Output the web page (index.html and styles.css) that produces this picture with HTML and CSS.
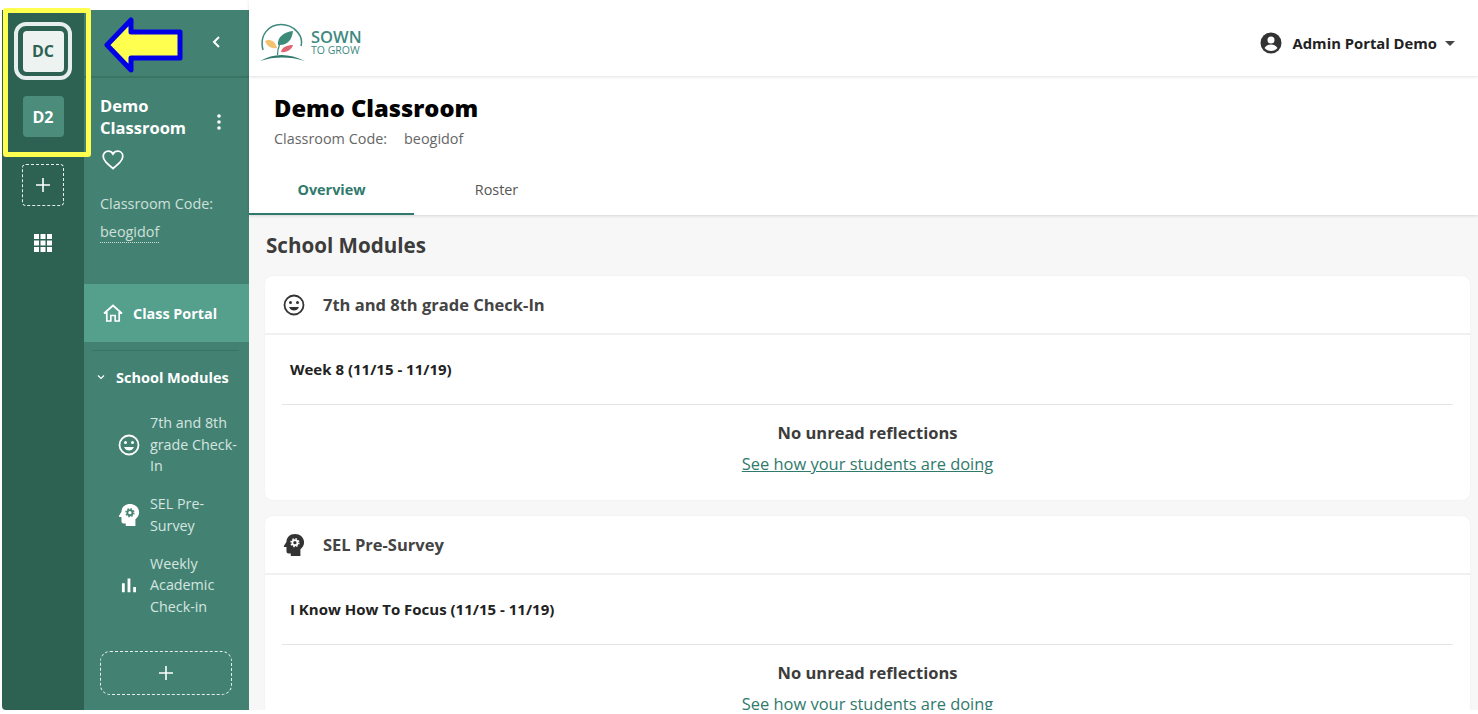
FILE: index.html
```html
<!DOCTYPE html>
<html lang="en">
<head>
<meta charset="utf-8">
<title>Demo Classroom</title>
<link rel="stylesheet" href="styles.css">
</head>
<body>
<div class="app">
  <nav class="rail">
    <div class="ring"><div class="tile tile-active">DC</div></div>
    <div class="tile tile-other">D2</div>
    <div class="tile-add"><svg width="16" height="16" viewBox="0 0 16 16"><path d="M8 1v14M1 8h14" stroke="#fff" stroke-width="1.6"/></svg></div>
    <svg class="grid-icon" width="18" height="18" viewBox="0 0 18 18" fill="#fff"><path d="M0 0h5v5H0zM6.500 0h5v5h-5zM13 0h5v5h-5zM0 6.500h5v5H0zM6.500 6.500h5v5h-5zM13 6.500h5v5h-5zM0 13h5v5H0zM6.500 13h5v5h-5zM13 13h5v5h-5z"/></svg>
  </nav>
  <aside class="panel">
    <div class="panel-top"><svg width="10" height="14" viewBox="0 0 10 14" fill="none"><path d="M8 2 3 7l5 5" stroke="#fff" stroke-width="2"/></svg></div>
    <div class="class-info">
      <div class="class-head">
        <div class="class-name">Demo Classroom</div>
        <svg class="dots" width="4" height="16" viewBox="0 0 4 16" fill="#fff"><circle cx="2" cy="2" r="1.800"/><circle cx="2" cy="8" r="1.800"/><circle cx="2" cy="14" r="1.800"/></svg>
      </div>
      <svg class="heart" width="22" height="20" viewBox="0 0 22 20" fill="none"><path d="M11 18.500C5 13.500 1.200 10.300 1.200 6.300 1.200 3.300 3.500 1.200 6.200 1.200c1.900 0 3.800 1 4.800 2.800 1-1.800 2.900-2.800 4.800-2.800 2.700 0 5 2.100 5 5.100 0 4-3.800 7.200-9.800 12.200z" stroke="#fff" stroke-width="1.800"/></svg>
      <div class="code-label">Classroom Code:</div>
      <div class="code-value"><span>beogidof</span></div>
    </div>
    <div class="portal">
      <svg width="20" height="18" viewBox="0 0 20 18" fill="none" stroke="#fff" stroke-width="1.700"><path d="M1 9.500 10 1.500l9 8M3.800 8v9h4v-5.500h4.400V17h4V8"/></svg>
      <span>Class Portal</span>
    </div>
    <div class="panel-rule"></div>
    <div class="modules-head">
      <svg width="8" height="6" viewBox="0 0 8 6" fill="none"><path d="m1 1.500 3 3 3-3" stroke="#fff" stroke-width="1.200"/></svg>
      <span>School Modules</span>
    </div>
    <ul class="module-list">
      <li class="module">
        <svg class="module-icon" width="22" height="22" viewBox="0 0 22 22" fill="none"><circle cx="11" cy="11" r="9.500" stroke="#fff" stroke-width="1.800"/><circle cx="7.500" cy="8.500" r="1.500" fill="#fff"/><circle cx="14.500" cy="8.500" r="1.500" fill="#fff"/><path d="M6 13c1 2.500 3 3.500 5 3.500s4-1 5-3.500z" fill="#fff"/></svg>
        <span>7th and 8th grade Check-In</span>
      </li>
      <li class="module">
        <svg class="module-icon" width="22" height="24" viewBox="0 0 24 26"><path d="M13 1C7.500 1 3.800 4.800 3.800 9.500L1 14c-.3.600.1 1.200.8 1.200h2V20c0 1.200 1 2.200 2.200 2.200h2.500V25h10.500v-7.500c2.500-1.700 4-4.500 4-7.500C23 4.800 18.500 1 13 1z" fill="#fff"/><circle cx="13" cy="10.500" r="2.800" fill="none" stroke="#438272" stroke-width="2"/><circle cx="13" cy="10.500" r="4.300" fill="none" stroke="#438272" stroke-width="1.500" stroke-dasharray="1.700 1.680"/></svg>
        <span>SEL Pre-Survey</span>
      </li>
      <li class="module">
        <svg class="module-icon module-bars" width="15" height="15" viewBox="0 0 16 16" fill="#fff"><path d="M1 6h3v10H1zM7 1h3v15H7zM13 10h3v6h-3z"/></svg>
        <span>Weekly Academic Check-in</span>
      </li>
    </ul>
    <div class="module-add"><svg width="16" height="16" viewBox="0 0 16 16"><path d="M8 1v14M1 8h14" stroke="#fff" stroke-width="1.600"/></svg></div>
  </aside>
  <div class="content">
    <header class="topbar">
      <div class="logo">
        <svg width="46" height="38" viewBox="0 0 46 38" fill="none">
          <path d="M3 27C-1 12 9 1.500 21 1.500S44 12 41 23" stroke="#3f8a80" stroke-width="1.500"/>
          <path d="M0 38c7-4 14-6 21.500-6S37 34 45 38c-8-2.500-15-3.500-23-3.500S8 35.500 0 38z" fill="#2f7a6c"/>
          <path d="M17.500 32c0-4 .5-7 2-10" stroke="#3f8a80" stroke-width="1.300"/>
          <path d="M18 22c-1-8 6-13 15-14-1 9-6 15-15 14z" fill="#3c8a78"/>
          <path d="M5 18c4-2 10-1 12 7-6 1-10-2-12-7z" fill="#f3c26f"/>
          <path d="M21 29c1-5 6-7 12-7-1 4-6 8-12 7z" fill="#dd6470"/>
        </svg>
        <div class="logo-text"><div class="logo-main">SOWN</div><div class="logo-sub">TO GROW</div></div>
      </div>
      <div class="user">
        <svg class="user-icon" width="22" height="22" viewBox="0 0 22 22"><circle cx="11" cy="11" r="10.500" fill="#333"/><circle cx="11" cy="8" r="3.500" fill="#fff"/><path d="M4.500 16c1.500-2.500 4-3.500 6.500-3.500s5 1 6.500 3.500c-1.500 2-4 3-6.500 3s-5-1-6.500-3z" fill="#fff"/></svg>
        <span>Admin Portal Demo</span>
        <svg width="10" height="5" viewBox="0 0 10 5" fill="#444"><path d="M0 0h10L5 5z"/></svg>
      </div>
    </header>
    <section class="class-bar">
      <h1>Demo Classroom</h1>
      <div class="class-code"><span>Classroom Code:</span><span>beogidof</span></div>
      <div class="tabs">
        <div class="tab tab-active">Overview</div>
        <div class="tab tab-plain">Roster</div>
      </div>
    </section>
    <main class="body">
      <h2>School Modules</h2>
      <article class="card">
        <div class="card-head">
          <svg width="22" height="22" viewBox="0 0 22 22" fill="none"><circle cx="11" cy="11" r="9.500" stroke="#333" stroke-width="1.800"/><circle cx="7.500" cy="8.500" r="1.500" fill="#333"/><circle cx="14.500" cy="8.500" r="1.500" fill="#333"/><path d="M6 13c1 2.500 3 3.500 5 3.500s4-1 5-3.500z" fill="#333"/></svg>
          <span>7th and 8th grade Check-In</span>
        </div>
        <div class="card-week">Week 8 (11/15 - 11/19)</div>
        <div class="card-body">
          <div class="none">No unread reflections</div>
          <a class="see" href="#">See how your students are doing</a>
        </div>
      </article>
      <article class="card">
        <div class="card-head">
          <svg width="24" height="26" viewBox="0 0 24 26"><path d="M13 1C7.500 1 3.800 4.800 3.800 9.500L1 14c-.3.600.1 1.200.8 1.200h2V20c0 1.200 1 2.200 2.200 2.200h2.500V25h10.500v-7.500c2.500-1.700 4-4.500 4-7.500C23 4.800 18.500 1 13 1z" fill="#333"/><circle cx="13" cy="10.500" r="2.800" fill="none" stroke="#fff" stroke-width="2"/><circle cx="13" cy="10.500" r="4.300" fill="none" stroke="#fff" stroke-width="1.500" stroke-dasharray="1.700 1.680"/></svg>
          <span>SEL Pre-Survey</span>
        </div>
        <div class="card-week">I Know How To Focus (11/15 - 11/19)</div>
        <div class="card-body">
          <div class="none">No unread reflections</div>
          <a class="see" href="#">See how your students are doing</a>
        </div>
      </article>
    </main>
  </div>
  <div class="highlight"></div>
  <svg class="arrow" width="84" height="60" viewBox="0 0 84 60"><path d="M3 30 27 5v12h49v26H27v12z" fill="#ffff4f" stroke="#0000e6" stroke-width="5" stroke-linejoin="round"/></svg>
</div>
</body>
</html>
```
FILE: styles.css
```css
* { box-sizing: border-box; }
html, body { margin: 0; height: 100%; overflow: hidden; background: #fff; }
body { font-family: "Open Sans", "Liberation Sans", sans-serif; color: #333; }
.app { position: relative; display: flex; height: 710px; width: 1478px; overflow: hidden; }

.rail { width: 82px; margin: 10px 0 0 2px; background: #2d6252; border-bottom-left-radius: 4px; display: flex; flex-direction: column; align-items: center; padding-top: 12px; flex-shrink: 0; }
.ring { width: 58px; height: 58px; border: 4px solid #e6efed; border-radius: 12px; display: flex; align-items: center; justify-content: center; }
.tile { width: 41px; height: 41px; flex-shrink: 0; border-radius: 4px; display: flex; align-items: center; justify-content: center; font-size: 16px; font-weight: 700; }
.tile-active { background: #edf3f1; color: #2d6252; }
.tile-other { background: #4b8c7b; color: #fff; margin-top: 16px; }
.tile-add { width: 42px; height: 42px; margin-top: 27px; border: 1px dashed #e6efed; border-radius: 4px; display: flex; align-items: center; justify-content: center; }
.grid-icon { margin-top: 28px; }

.panel { width: 165px; margin-top: 10px; background: #438272; color: #fff; flex-shrink: 0; display: flex; flex-direction: column; }
.panel-top { height: 68px; padding: 25px 28px 0 0; display: flex; justify-content: flex-end; align-items: flex-start; border-bottom: 2px solid #3a7463; }
.class-info { padding: 17px 16px 0; height: 206px; }
.class-head { display: flex; align-items: center; justify-content: space-between; padding-right: 12px; }
.class-name { width: 95px; font-size: 16.500px; line-height: 22px; font-weight: 700; }
.dots { margin-top: 10px; }
.heart { display: block; margin-top: 11px; margin-left: 2px; }
.code-label { margin-top: 24px; font-size: 14.400px; line-height: 20px; color: #cfe0db; }
.code-value { margin-top: 8px; font-size: 14.400px; line-height: 20px; color: #cfe0db; }
.code-value span { border-bottom: 1px dotted #cfe0db; display: inline-block; }
.portal { height: 58px; background: #54a08d; display: flex; align-items: center; gap: 10px; padding-left: 19px; font-size: 14.400px; font-weight: 700; }
.panel-rule { height: 1px; margin: 8px 10px 0 8px; background: #3a7463; }
.modules-head { display: flex; align-items: center; gap: 11px; margin-top: 16px; padding-left: 13px; height: 20px; font-size: 14.500px; font-weight: 700; }
.module-list { list-style: none; margin: 25px 0 0; padding: 0; }
.module { display: flex; align-items: center; position: relative; padding: 0 6px 0 66px; font-size: 14.300px; line-height: 21.700px; color: #d6e5e0; margin-bottom: 16px; }
.module-icon { position: absolute; left: 34px; top: 50%; transform: translateY(-50%); }
.module-bars { left: 37px; }
.module-add { width: 132px; height: 44px; margin: 17px 0 0 16px; border: 1px dashed #e6efed; border-radius: 10px; display: flex; align-items: center; justify-content: center; }

.content { flex: 1; min-width: 0; display: flex; flex-direction: column; background: #f7f7f7; }
.topbar { height: 76px; background: #fff; display: flex; align-items: center; justify-content: space-between; padding: 8px 23px 0 11px; box-shadow: 0 1px 3px rgba(0,0,0,.12); position: relative; z-index: 2; flex-shrink: 0; }
.logo { display: flex; align-items: center; gap: 5px; }
.logo-text { color: #3f8a80; }
.logo-main { font-size: 16.500px; line-height: 16px; font-weight: 600; }
.logo-sub { font-size: 10.500px; line-height: 11px; }
.user { display: flex; align-items: center; gap: 8px; margin-top: 2px; font-size: 14.800px; font-weight: 700; color: #222; }
.user-icon { margin-right: 3px; }
.class-bar { height: 139px; background: #fff; padding-top: 17px; box-shadow: 0 1px 3px rgba(0,0,0,.14); position: relative; z-index: 1; flex-shrink: 0; display: flex; flex-direction: column; }
h1 { margin: 0 0 0 25px; font-size: 23.700px; line-height: 30px; font-weight: 800; color: #000; }
.class-code { margin: 6px 0 0 25px; display: flex; gap: 17px; font-size: 14.400px; line-height: 20px; color: #666; }
.tabs { display: flex; margin-top: auto; }
.tab { width: 165px; height: 50px; display: flex; align-items: center; justify-content: center; font-size: 14.400px; color: #555; }
.tab-plain { padding-bottom: 2px; }
.tab-active { color: #2f7a6c; font-weight: 700; border-bottom: 2px solid #2f7a6c; }
.body { padding: 0 8px 0 16px; flex: 1; overflow: hidden; }
h2 { margin: 15px 0 16px 1px; font-size: 20.600px; line-height: 30px; font-weight: 700; color: #3c3c3c; }
.card { background: #fff; border-radius: 8px; margin-bottom: 16px; box-shadow: 0 0 2px rgba(0,0,0,.05); }
.card-head { height: 59px; display: flex; align-items: center; gap: 18px; padding-left: 18px; border-bottom: 2px solid #f0f0f0; font-size: 16.500px; font-weight: 700; color: #444; }
.card-head svg { width: 22px; }
.card-week { margin: 0 17px; padding: 24px 0 0 8px; height: 70px; border-bottom: 1px solid #e4e4e4; font-size: 15px; line-height: 20px; font-weight: 700; color: #222; }
.card-body { height: 95px; padding-top: 17px; text-align: center; }
.none { font-size: 16.500px; line-height: 22px; font-weight: 700; color: #3c3c3c; }
.see { display: block; margin-top: 9px; font-size: 16.450px; line-height: 22px; color: #2f7a6c; }

.highlight { position: absolute; left: 3px; top: 8px; width: 88px; height: 149px; border: 5px solid #ffff4f; border-radius: 3px; }
.arrow { position: absolute; left: 104px; top: 15px; }
```
